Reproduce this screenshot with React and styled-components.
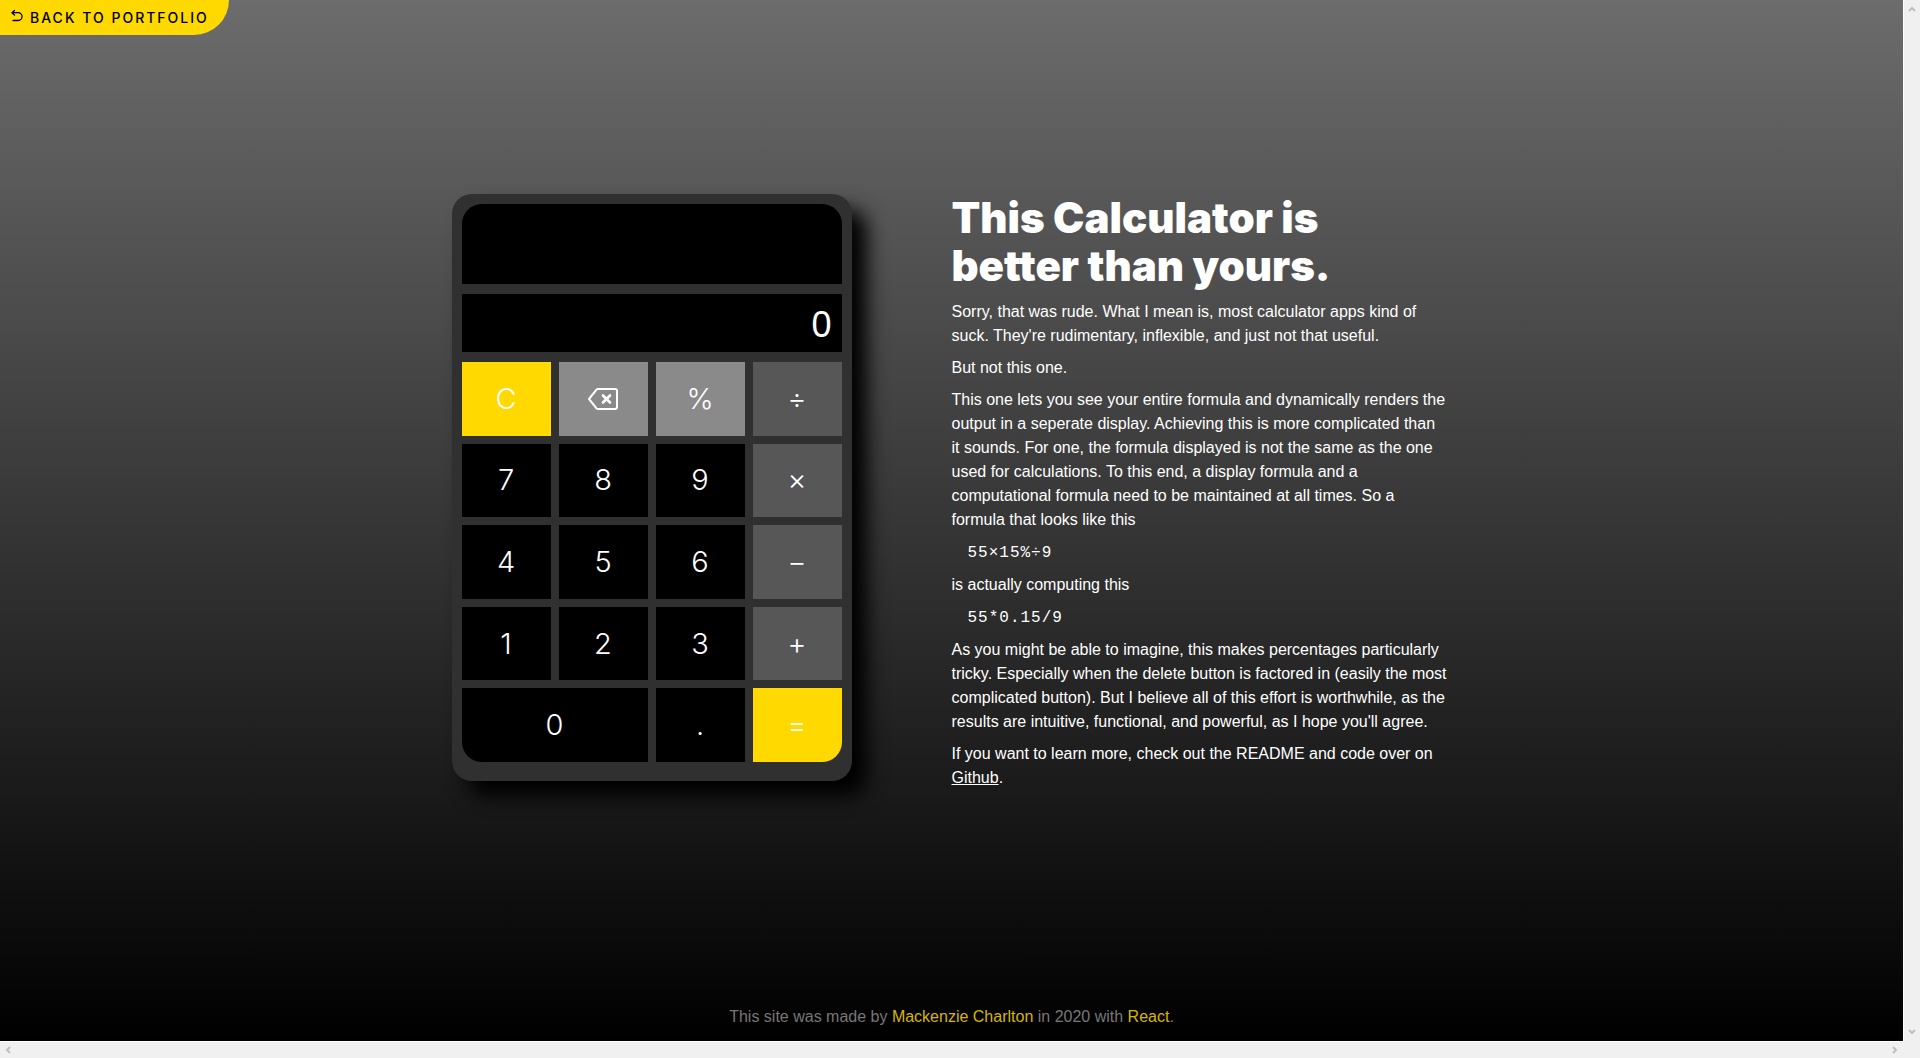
import React, { useState } from "react";
import styled, { createGlobalStyle } from "styled-components";

const sans = `"Liberation Sans", Arial, Helvetica, sans-serif`;
const display = `Inter, "Liberation Sans", Arial, sans-serif`;
const mono = `"Liberation Mono", "Courier New", monospace`;
const yellow = "#ffd900";

const GlobalStyle = createGlobalStyle`
  *, *::before, *::after { box-sizing: border-box; }
  body {
    margin: 0;
    background: #000;
    color: #fff;
    font-family: ${sans};
    font-size: 16px;
    line-height: 24px;
  }
  h1, p, pre { margin: 0; }
  button { font: inherit; color: inherit; }
`;

const Frame = styled.div`
  display: grid;
  grid-template-columns: minmax(0, 1fr) 17px;
  grid-template-rows: minmax(0, 1fr) 17px;
  min-height: 100vh;
`;

const Page = styled.div`
  display: flex;
  flex-direction: column;
  background: linear-gradient(#6c6c6c, #000);
`;

const BackLink = styled.a`
  display: flex;
  align-items: center;
  align-self: flex-start;
  gap: 6px;
  height: 35px;
  padding: 0 20px 0 10px;
  border-bottom-right-radius: 40px;
  background: ${yellow};
  color: #000;
  font-family: ${display};
  font-size: 14px;
  font-weight: 500;
  letter-spacing: 2px;
  text-transform: uppercase;
  text-decoration: none;

  svg { margin-bottom: 4px; }
`;

const Main = styled.main`
  flex: 1;
  display: flex;
  flex-wrap: wrap;
  justify-content: center;
  align-content: center;
  align-items: flex-start;
  gap: 100px;
  padding-bottom: 44px;
`;

const Calculator = styled.section`
  display: flex;
  flex-direction: column;
  gap: 10px;
  width: 400px;
  padding: 10px 10px 19px;
  border-radius: 20px;
  background: #303030;
  box-shadow: 15px 15px 20px #000;
`;

const Formula = styled.output`
  display: block;
  height: 80px;
  border-radius: 20px 20px 0 0;
  background: #000;
  padding: 10px;
  text-align: right;
  font-size: 20px;
`;

const Result = styled.output`
  display: block;
  height: 58px;
  padding: 0 10px;
  background: #000;
  text-align: right;
  font-size: 36px;
  line-height: 62px;
`;

const Keys = styled.div`
  display: grid;
  grid-template-columns: repeat(4, 1fr);
  grid-template-rows: repeat(5, 1fr);
  gap: 8px;
  height: 400px;
`;

const tones = { digit: "#000", utility: "#8a8a8a", operator: "#575757", accent: yellow };

const Key = styled.button`
  display: flex;
  align-items: center;
  justify-content: center;
  grid-column: span ${(p) => p.$span || 1};
  padding: 0;
  border: 0;
  border-radius: ${(p) => p.$radius || "0"};
  background: ${(p) => tones[p.$tone]};
  color: #fff;
  font-family: ${display};
  font-size: 29px;
  font-weight: 300;
  cursor: pointer;
`;

const About = styled.article`
  display: flex;
  flex-direction: column;
  gap: 8px;
  width: 500px;
`;

const Title = styled.h1`
  margin-bottom: 2px;
  font-family: ${display};
  font-size: 42px;
  line-height: 48px;
  font-weight: 900;
`;

const Code = styled.pre`
  padding: 1px 0 0 16px;
  font-family: ${mono};
  font-size: 16px;
  letter-spacing: 1px;
`;

const TextLink = styled.a`
  color: inherit;
`;

const Footer = styled.footer`
  padding: 12px 0;
  text-align: center;
  color: #777;

  a { color: #d6b600; text-decoration: none; }
`;

const ScrollTrack = styled.div`
  display: flex;
  flex-direction: ${(p) => (p.$vertical ? "column" : "row")};
  justify-content: space-between;
  align-items: center;
  padding: ${(p) => (p.$vertical ? "5px 0" : "0 4px")};
  border-style: solid;
  border-color: #fff;
  border-width: ${(p) => (p.$vertical ? "0 0 0 1px" : "1px 0 0 0")};
  background: #f0f0f0;
`;

const Corner = styled.div`
  background: #f0f0f0;
`;

const Chevron = ({ turn }) => (
  <svg width="8" height="8" viewBox="0 0 8 8" aria-hidden="true">
    <path d="M1 6 4 3 7 6" transform={`rotate(${turn} 4 4)`} fill="none" stroke="#bfbfbf" strokeWidth="2" />
  </svg>
);

const BackIcon = () => (
  <svg width="14" height="14" viewBox="0 0 14 14" fill="none" stroke="#000" strokeWidth="1.3" strokeLinecap="round" strokeLinejoin="round" aria-hidden="true">
    <path d="M4.5 1.5 2 3.7 4.5 6M2 3.7H8.2a3.9 3.9 0 0 1 0 7.8H3" />
  </svg>
);

const DeleteIcon = () => (
  <svg width="32" height="24" viewBox="0 0 32 24" fill="none" stroke="#fff" strokeWidth="2" strokeLinejoin="round" aria-hidden="true">
    <path d="M11 2H28a2 2 0 0 1 2 2V20a2 2 0 0 1-2 2H11a2 2 0 0 1-1.500-.7L2 12 9.500 2.700A2 2 0 0 1 11 2Z" />
    <path d="M16 8.500 23 15.500M23 8.500 16 15.500" strokeWidth="2.600" strokeLinecap="round" />
  </svg>
);

const keys = [
  { label: "C", tone: "accent", name: "Clear" },
  { label: <DeleteIcon />, tone: "utility", name: "Delete" },
  { label: "%", tone: "utility" },
  { label: "÷", tone: "operator" },
  { label: "7" }, { label: "8" }, { label: "9" },
  { label: "×", tone: "operator" },
  { label: "4" }, { label: "5" }, { label: "6" },
  { label: "−", tone: "operator" },
  { label: "1" }, { label: "2" }, { label: "3" },
  { label: "+", tone: "operator" },
  { label: "0", span: 2, radius: "0 0 0 20px" },
  { label: "." },
  { label: "=", tone: "accent", radius: "0 0 20px 0" },
];

export default function App() {
  const [formula, setFormula] = useState("");

  const press = (key) => {
    if (key.name === "Clear") setFormula("");
    else if (key.name === "Delete") setFormula((f) => f.slice(0, -1));
    else if (key.label !== "=") setFormula((f) => f + key.label);
  };

  return (
    <>
      <GlobalStyle />
      <Frame>
        <Page>
          <BackLink href="#portfolio">
            <BackIcon />
            Back to portfolio
          </BackLink>
          <Main>
            <Calculator>
              <Formula>{formula}</Formula>
              <Result>0</Result>
              <Keys>
                {keys.map((key, i) => (
                  <Key
                    key={i}
                    type="button"
                    aria-label={key.name}
                    $tone={key.tone || "digit"}
                    $span={key.span}
                    $radius={key.radius}
                    onClick={() => press(key)}
                  >
                    {key.label}
                  </Key>
                ))}
              </Keys>
            </Calculator>
            <About>
              <Title>
                This Calculator is
                <br />
                better than yours.
              </Title>
              <p>
                Sorry, that was rude. What I mean is, most calculator apps kind of suck. They're
                rudimentary, inflexible, and just not that useful.
              </p>
              <p>But not this one.</p>
              <p>
                This one lets you see your entire formula and dynamically renders the output in a
                seperate display. Achieving this is more complicated than it&nbsp;sounds. For one, the
                formula displayed is not the same as the one used for calculations. To this end, a
                display formula and a computational formula need to be maintained at all times. So a
                formula that looks like this
              </p>
              <Code>55×15%÷9</Code>
              <p>is actually computing this</p>
              <Code>55*0.15/9</Code>
              <p>
                As you might be able to imagine, this makes percentages particularly tricky.
                Especially when the delete button is factored in (easily the most complicated
                button). But I believe all of this effort is worthwhile, as the results are
                intuitive, functional, and powerful, as I hope you'll agree.
              </p>
              <p>
                If you want to learn more, check out the README and code over on{" "}
                <TextLink href="#github">Github</TextLink>.
              </p>
            </About>
          </Main>
          <Footer>
            This site was made by <a href="#author">Mackenzie Charlton</a> in 2020 with{" "}
            <a href="#react">React</a>.
          </Footer>
        </Page>
        <ScrollTrack $vertical>
          <Chevron turn={0} />
          <Chevron turn={180} />
        </ScrollTrack>
        <ScrollTrack>
          <Chevron turn={270} />
          <Chevron turn={90} />
        </ScrollTrack>
        <Corner />
      </Frame>
    </>
  );
}
